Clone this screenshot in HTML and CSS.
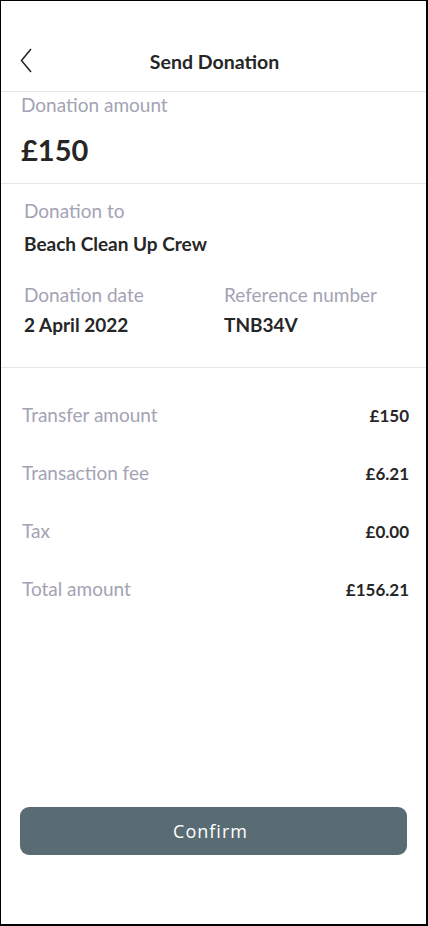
FILE: index.html
```html
<!DOCTYPE html>
<html>
  <head>
    <meta charset="utf-8">
    <meta name="viewport" content="width=device-width, minimum-scale=1">
    <title>Send Donation</title>
    <link rel="stylesheet" href="styles.css">
  </head>
  <body>
    <div id="screen">
      <div id="header">
        <button id="back" aria-label="Back">
          <svg width="12" height="25" viewBox="0 0 12 25">
            <path d="M11 1 L1.5 12.5 L11 24" fill="none" stroke="#222" stroke-width="1.5"/>
          </svg>
        </button>
        <h1>Send Donation</h1>
      </div>

      <div class="section amount">
        <div class="label">Donation amount</div>
        <div class="big">£150</div>
      </div>

      <div class="section details">
        <div class="label">Donation to</div>
        <div class="value">Beach Clean Up Crew</div>
        <div class="pair">
          <div>
            <div class="label">Donation date</div>
            <div class="value">2 April 2022</div>
          </div>
          <div>
            <div class="label">Reference number</div>
            <div class="value">TNB34V</div>
          </div>
        </div>
      </div>

      <div id="summary">
        <div class="row"><span class="label">Transfer amount</span><span class="value">£150</span></div>
        <div class="row"><span class="label">Transaction fee</span><span class="value">£6.21</span></div>
        <div class="row"><span class="label">Tax</span><span class="value">£0.00</span></div>
        <div class="row"><span class="label">Total amount</span><span class="value">£156.21</span></div>
      </div>

      <div id="footer">
        <button id="confirm">Confirm</button>
      </div>
    </div>
  </body>
</html>
```

FILE: styles.css
```css
html, body {
  margin: 0;
  padding: 0;
  background: #fff;
}

#screen {
  box-sizing: border-box;
  height: 926px;
  border: 1px solid #000;
  border-width: 1px 2px 2px 1px;
  font-family: "Lato", sans-serif;
  color: #262626;
  display: flex;
  flex-direction: column;
}

#header {
  display: flex;
  align-items: center;
  justify-content: center;
  position: relative;
  height: 91px;
  box-sizing: border-box;
  border-bottom: 1px solid #e6e6e6;
}

#header h1 {
  margin: 0;
  font-size: 19.5px;
  font-weight: 700;
  padding-top: 30px;
  padding-left: 2px;
}

#back {
  position: absolute;
  left: 19px;
  top: 47px;
  background: none;
  border: none;
  padding: 0;
  line-height: 0;
}

.label {
  color: #a3a3b4;
  font-size: 19px;
  line-height: 24px;
}

.value {
  font-weight: 700;
  font-size: 19px;
  line-height: 23px;
}

.section {
  border-bottom: 1px solid #e6e6e6;
}

.amount {
  padding: 1px 20px 0;
  height: 92px;
  box-sizing: border-box;
}

.amount .big {
  font-size: 29px;
  line-height: 35px;
  font-weight: 700;
  margin-top: 15px;
}

.details {
  padding: 15px 23px 0;
  height: 184px;
  box-sizing: border-box;
}

.details .value {
  margin-top: 9px;
}

.pair {
  display: grid;
  grid-template-columns: 200px 1fr;
  margin-top: 28px;
}

.pair .value {
  margin-top: 6px;
}

#summary {
  padding: 35px 17px 0 21px;
  display: flex;
  flex-direction: column;
  gap: 34px;
}

.row {
  display: flex;
  justify-content: space-between;
  align-items: center;
  height: 24px;
}

.row .value {
  font-size: 17px;
}

#footer {
  margin-top: auto;
  padding: 0 19px 69px 19px;
}

#confirm {
  width: 100%;
  height: 48px;
  border: none;
  border-radius: 9px;
  background: #596c74;
  color: #fff;
  font-family: "Open Sans", sans-serif;
  font-size: 18px;
  font-weight: 500;
  letter-spacing: 1px;
  padding-right: 12px;
}
```
